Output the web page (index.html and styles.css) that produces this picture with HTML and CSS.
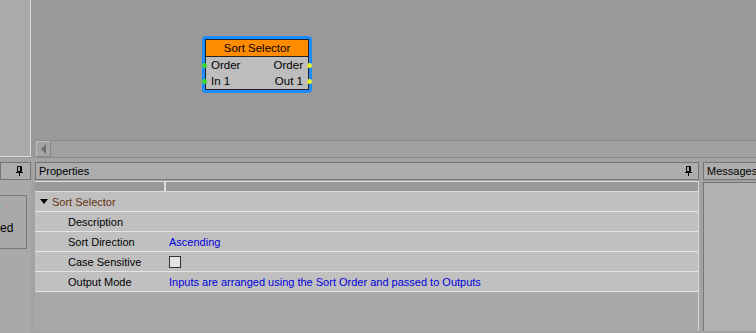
FILE: index.html
```html
<!DOCTYPE html>
<html>
    <head>
        <meta charset="UTF-8">
        <title>Sort Selector</title>
        <link rel="stylesheet" href="styles.css">
    </head>
    <body>
        <div class="top">
            <div class="side-top"></div>
            <div class="canvas">
                <div class="graph">
                    <div class="node">
                        <div class="node-inner">
                            <div class="node-title">Sort Selector</div>
                            <div class="node-row">
                                <span class="port in"></span>
                                <span>Order</span>
                                <span>Order</span>
                                <span class="port out"></span>
                            </div>
                            <div class="node-row">
                                <span class="port in"></span>
                                <span>In 1</span>
                                <span>Out 1</span>
                                <span class="port out"></span>
                            </div>
                        </div>
                    </div>
                </div>
                <div class="hscroll">
                    <div class="scroll-btn"><span class="arrow-left"></span></div>
                </div>
            </div>
        </div>
        <div class="bottom">
            <div class="side-bottom">
                <div class="panel-head pin-only">
                    <svg class="pin" width="7" height="10" viewBox="0 0 7 10"><path d="M1.5 0.5h4v5h-4z" fill="none" stroke="#000"/><path d="M4 1v4.5h1V1z" fill="#000"/><path d="M0 6h7v1H0zM3 7h1v3H3z" fill="#000"/></svg>
                </div>
                <div class="side-body">
                    <div class="side-box"><span class="dot"></span><span class="side-text">ed</span></div>
                </div>
            </div>
            <div class="props">
                <div class="panel-head">
                    <span>Properties</span>
                    <svg class="pin" width="7" height="10" viewBox="0 0 7 10"><path d="M1.5 0.5h4v5h-4z" fill="none" stroke="#000"/><path d="M4 1v4.5h1V1z" fill="#000"/><path d="M0 6h7v1H0zM3 7h1v3H3z" fill="#000"/></svg>
                </div>
                <div class="grid">
                    <div class="grid-head">
                        <div class="col-a"></div>
                        <div class="col-b"></div>
                    </div>
                    <div class="row category">
                        <span class="tri"></span>
                        <span>Sort Selector</span>
                    </div>
                    <div class="row">
                        <span class="label">Description</span>
                        <span class="value"></span>
                    </div>
                    <div class="row">
                        <span class="label">Sort Direction</span>
                        <span class="value">Ascending</span>
                    </div>
                    <div class="row">
                        <span class="label">Case Sensitive</span>
                        <span class="value"><span class="checkbox"></span></span>
                    </div>
                    <div class="row">
                        <span class="label">Output Mode</span>
                        <span class="value">Inputs are arranged using the Sort Order and passed to Outputs</span>
                    </div>
                </div>
            </div>
            <div class="messages">
                <div class="panel-head"><span>Messages</span></div>
                <div class="msg-body"></div>
            </div>
        </div>
    </body>
</html>
```

FILE: styles.css
```css
html, body {
    margin: 0;
    padding: 0;
}
body {
    width: 756px;
    height: 333px;
    overflow: hidden;
    background-color: #a3a3a3;
    font-family: 'Liberation Sans', Arial, sans-serif;
    font-size: 11px;
    color: #000;
}
.top {
    display: flex;
    height: 158px;
    background-color: #999;
}
.side-top {
    flex-shrink: 0;
    width: 30px;
    height: 156px;
    background-color: #aaa;
    border-right: 1px solid #dcdcdc;
    border-bottom: 1px solid #dcdcdc;
    margin-right: 4px;
}
.canvas {
    flex: 1;
    display: flex;
    flex-direction: column;
}
.graph {
    flex: 1;
    position: relative;
    background-color: #999;
}
.hscroll {
    height: 16px;
    border-top: 1px solid #8a8a8a;
    border-bottom: 1px solid #8a8a8a;
    background-color: #a0a0a0;
    display: flex;
}
.scroll-btn {
    width: 15px;
    margin-left: 1px;
    background-color: #a4a4a4;
    border: 1px solid #888;
    border-top-color: #bbb;
    border-left-color: #bbb;
    box-sizing: border-box;
    display: flex;
    align-items: center;
    justify-content: center;
}
.arrow-left {
    width: 0;
    height: 0;
    border-top: 5px solid transparent;
    border-bottom: 5px solid transparent;
    border-right: 5px solid #6e6e6e;
}

/* node on the graph canvas */
.node {
    position: absolute;
    left: 167px;
    top: 36px;
    width: 110px;
    height: 57px;
    box-sizing: border-box;
    border: 2px solid #1e8cff;
    border-radius: 4px;
    padding: 1px;
    background-color: #1e8cff;
}
.node-inner {
    height: 100%;
    box-sizing: border-box;
    border: 1px solid #222;
    background-color: #bdbdbd;
}
.node-title {
    height: 16px;
    line-height: 16px;
    background-color: #ff8c00;
    border-bottom: 1px solid #222;
    text-align: center;
    font-size: 11.5px;
}
.node-row {
    display: flex;
    align-items: center;
    justify-content: space-between;
    height: 16px;
    padding: 0 5px;
    position: relative;
    font-size: 11.5px;
}
.port {
    position: absolute;
    top: 6px;
    width: 5px;
    height: 5px;
    border-radius: 50%;
}
.port.in {
    left: -4px;
    background-color: #33dd33;
}
.port.out {
    right: -4px;
    background-color: #eeee33;
}

.bottom {
    display: flex;
    padding-top: 4px;
    height: 171px;
}
.panel-head {
    height: 18px;
    box-sizing: border-box;
    border: 1px solid #747474;
    background-color: #adadad;
    display: flex;
    align-items: center;
    justify-content: space-between;
    padding: 0 6px 0 3px;
    font-size: 11px;
    white-space: nowrap;
    overflow: hidden;
}
.pin {
    display: block;
    flex-shrink: 0;
}
.pin-only {
    justify-content: flex-end;
    padding-right: 7px;
}
.side-bottom {
    flex-shrink: 0;
    width: 31px;
    margin-right: 4px;
    display: flex;
    flex-direction: column;
}
.side-body {
    flex: 1;
    background-color: #a9a9a9;
    padding-top: 15px;
}
.side-box {
    width: 27px;
    height: 54px;
    box-sizing: border-box;
    border: 1px solid #777;
    border-left: none;
    position: relative;
}
.dot {
    position: absolute;
    left: 0;
    top: 10px;
    width: 1px;
    height: 1px;
    background-color: #4cc;
}
.side-text {
    position: absolute;
    left: 0;
    top: 25px;
    font-size: 12px;
}
.props {
    flex-shrink: 0;
    width: 664px;
    margin-right: 4px;
    display: flex;
    flex-direction: column;
}
.grid {
    flex: 1;
    margin-top: 1px;
    margin-bottom: 2px;
    background-color: #a8a8a8;
    border-right: 1px solid #d8d8d8;
}
.grid-head {
    display: flex;
    height: 9px;
    background-color: #999;
    border-top: 1px solid #dcdcdc;
    border-bottom: 1px solid #dcdcdc;
}
.col-a {
    width: 129px;
    border-right: 2px solid #dcdcdc;
}
.row {
    display: flex;
    align-items: center;
    height: 19px;
    background-color: #c0c0c0;
    border-bottom: 1px solid #e4e4e4;
    font-size: 11px;
}
.category {
    color: #663311;
    padding-left: 5px;
}
.tri {
    width: 0;
    height: 0;
    border-left: 4px solid transparent;
    border-right: 4px solid transparent;
    border-top: 5px solid #000;
    margin-right: 4px;
}
.label {
    width: 101px;
    padding-left: 33px;
}
.value {
    color: #0000dd;
}
.checkbox {
    display: block;
    width: 10px;
    height: 10px;
    border: 1px solid #333;
    background-color: #e4e4e4;
}
.messages {
    flex: 1;
    min-width: 0;
    display: flex;
    flex-direction: column;
}
.messages .panel-head {
    border-right: none;
}
.msg-body {
    flex: 1;
    margin-top: 2px;
    margin-bottom: 2px;
    border-left: 1px solid #777;
    border-top: 1px solid #777;
    background-color: #b1b1b1;
}
```
